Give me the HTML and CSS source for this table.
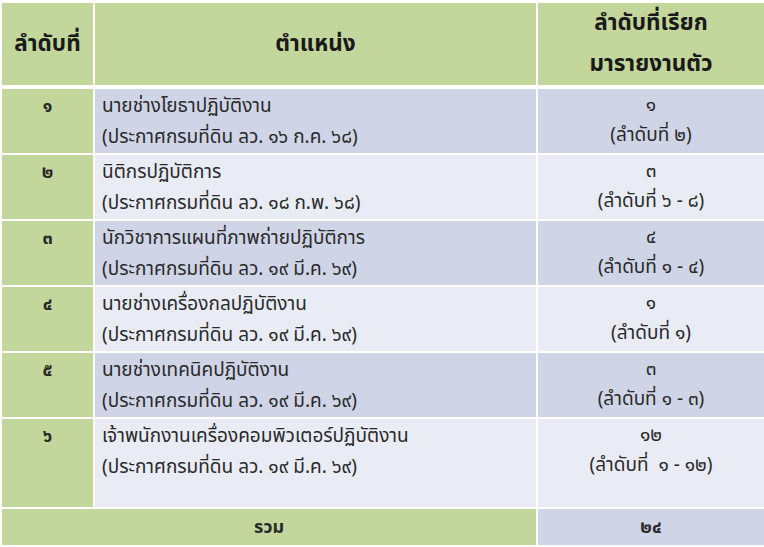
FILE: index.html
```html
<!DOCTYPE html>
<html lang="th">
<head>
<meta charset="utf-8">
<link rel="stylesheet" href="styles.css">
</head>
<body>
<table class="grid">
  <colgroup>
    <col class="c-no">
    <col class="c-pos">
    <col class="c-ord">
  </colgroup>
  <thead>
    <tr class="head">
      <th>ลำดับที่</th>
      <th>ตำแหน่ง</th>
      <th>ลำดับที่เรียก<br>มารายงานตัว</th>
    </tr>
  </thead>
  <tbody>
    <tr class="row dark">
      <td class="no">๑</td>
      <td class="pos">นายช่างโยธาปฏิบัติงาน<br>(ประกาศกรมที่ดิน ลว. ๑๖ ก.ค. ๖๘)</td>
      <td class="ord">๑<br>(ลำดับที่ ๒)</td>
    </tr>
    <tr class="row light">
      <td class="no">๒</td>
      <td class="pos">นิติกรปฏิบัติการ<br>(ประกาศกรมที่ดิน ลว. ๑๘ ก.พ. ๖๘)</td>
      <td class="ord">๓<br>(ลำดับที่ ๖ - ๘)</td>
    </tr>
    <tr class="row dark">
      <td class="no">๓</td>
      <td class="pos">นักวิชาการแผนที่ภาพถ่ายปฏิบัติการ<br>(ประกาศกรมที่ดิน ลว. ๑๙ มี.ค. ๖๙)</td>
      <td class="ord">๔<br>(ลำดับที่ ๑ - ๔)</td>
    </tr>
    <tr class="row light">
      <td class="no">๔</td>
      <td class="pos">นายช่างเครื่องกลปฏิบัติงาน<br>(ประกาศกรมที่ดิน ลว. ๑๙ มี.ค. ๖๙)</td>
      <td class="ord">๑<br>(ลำดับที่ ๑)</td>
    </tr>
    <tr class="row dark">
      <td class="no">๕</td>
      <td class="pos">นายช่างเทคนิคปฏิบัติงาน<br>(ประกาศกรมที่ดิน ลว. ๑๙ มี.ค. ๖๙)</td>
      <td class="ord">๓<br>(ลำดับที่ ๑ - ๓)</td>
    </tr>
    <tr class="row light tall">
      <td class="no">๖</td>
      <td class="pos">เจ้าพนักงานเครื่องคอมพิวเตอร์ปฏิบัติงาน<br>(ประกาศกรมที่ดิน ลว. ๑๙ มี.ค. ๖๙)</td>
      <td class="ord">๑๒<br>(ลำดับที่&nbsp; ๑ - ๑๒)</td>
    </tr>
    <tr class="total">
      <td class="sum-label" colspan="2">รวม</td>
      <td class="sum-value">๒๔</td>
    </tr>
  </tbody>
</table>
</body>
</html>
```

FILE: styles.css
```css
html, body {
  margin: 0;
  padding: 0;
  background: #ffffff;
}

body {
  font-family: Tahoma, "Noto Sans Thai", "Noto Sans", "DejaVu Sans", sans-serif;
  color: #2a2a2a;
}

.grid {
  margin-top: 1px;
  width: 764px;
  border-collapse: collapse;
  table-layout: fixed;
}

.c-no { width: 93px; }
.c-pos { width: 443px; }
.c-ord { width: 228px; }

.grid th,
.grid td {
  border: 2px solid #ffffff;
  padding: 0;
}

.head th {
  background: #c3d69b;
  height: 80px;
  font-size: 22.5px;
  font-weight: bold;
  color: #1a1a1a;
  line-height: 41px;
  border-bottom: 4px solid #ffffff;
  text-align: center;
}

.row td {
  height: 62px;
  padding-top: 2px;
  vertical-align: top;
  font-size: 19px;
  line-height: 31px;
}

.row.tall td {
  height: 86px;
}

.row .no {
  background: #c3d69b;
  text-align: center;
  font-weight: bold;
  font-size: 18px;
}

.row .pos {
  padding-left: 7px;
}

.row .ord {
  text-align: center;
  line-height: 30px;
}

.row.dark .pos,
.row.dark .ord {
  background: #cfd5e7;
}

.row.light .pos,
.row.light .ord {
  background: #e9ecf5;
}

.total td {
  height: 36px;
  font-weight: bold;
  font-size: 18px;
  text-align: center;
  vertical-align: middle;
}

.sum-label {
  background: #c3d69b;
}

.sum-value {
  background: #cfd5e7;
}
```
